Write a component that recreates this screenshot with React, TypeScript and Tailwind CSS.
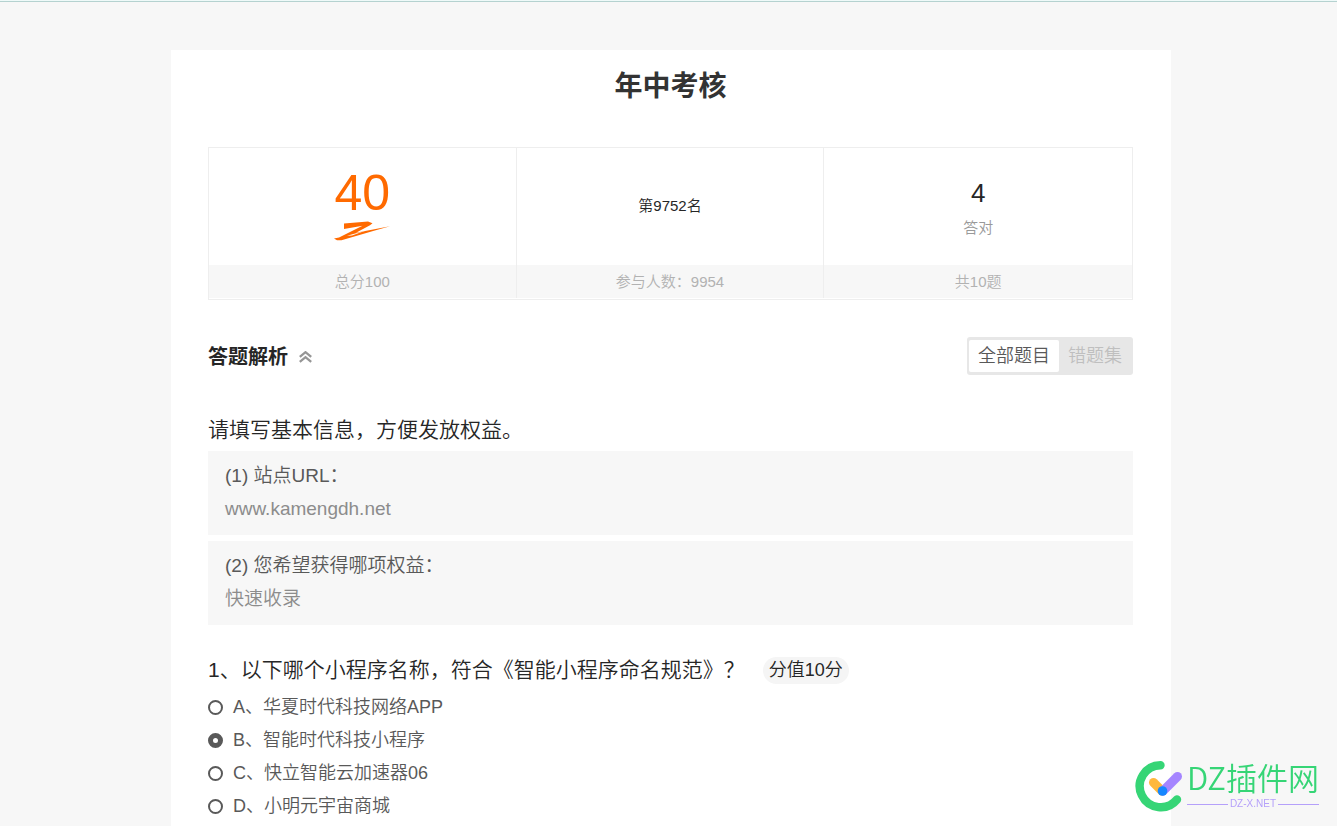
import { useState } from 'react';

type Stat = {
  id: string;
  footer: string;
};

const stats: Stat[] = [
  { id: 'score', footer: '总分100' },
  { id: 'rank', footer: '参与人数：9954' },
  { id: 'correct', footer: '共10题' },
];

const infoItems = [
  { id: 'url', question: '(1) 站点URL：', answer: 'www.kamengdh.net' },
  { id: 'benefit', question: '(2) 您希望获得哪项权益：', answer: '快速收录' },
];

const options = [
  { key: 'A', label: 'A、华夏时代科技网络APP' },
  { key: 'B', label: 'B、智能时代科技小程序' },
  { key: 'C', label: 'C、快立智能云加速器06' },
  { key: 'D', label: 'D、小明元宇宙商城' },
];

const tabs = [
  { id: 'all', label: '全部题目' },
  { id: 'wrong', label: '错题集' },
];

function Scribble() {
  return (
    <svg width="56" height="20" viewBox="0 0 56 20" fill="#ff6a00" aria-hidden="true">
      <path d="M10 2.4 34 0.4 38.5 2.2 36 4.2 22 11.8 56 5.2 40 9.8 7.5 19.2 3 19.2 0 17.6 5 16.4 28.5 4.8 10 8Z" />
      <path d="M13 14.8 32 9.4 18 14.4Z" fill="#fff" />
    </svg>
  );
}

function StatBody({ id }: { id: string }) {
  if (id === 'score') {
    return (
      <>
        <span className="text-[50px] leading-[42px] text-[#ff6a00]">40</span>
        <span className="pt-[7px]">
          <Scribble />
        </span>
      </>
    );
  }
  if (id === 'rank') {
    return <span className="pb-[2px] text-[15px] leading-6">第9752名</span>;
  }
  return (
    <>
      <span className="pt-1 text-[26px] leading-[38px]">4</span>
      <span className="text-[15px] leading-8 text-[#999]">答对</span>
    </>
  );
}

function Watermark() {
  return (
    <div className="fixed right-[18px] bottom-[14px] flex items-center gap-1" aria-hidden="true">
      <svg width="48" height="52" viewBox="0 0 48 52" fill="none" strokeLinecap="round">
        <path d="M25.5 5.2A21 21 0 1 0 42 39.5" stroke="#36d576" strokeWidth="8.4" />
        <path d="M18.5 22.5 27 31" stroke="#ffb83d" strokeWidth="9" />
        <path d="M42.5 16.5 28 31" stroke="#a585ff" strokeWidth="9" />
        <circle cx="27.5" cy="31" r="4.8" fill="#1687ff" />
      </svg>
      <div>
        <p className="mb-2 font-['Noto_Sans_CJK_SC',sans-serif] text-[31px] leading-7 font-[350] text-[#36d576]">
          DZ插件网
        </p>
        <p className="flex items-center gap-[2px] text-[10px] leading-[10px] text-[#b5a0fa]">
          <span className="h-px flex-1 bg-[#b5a0fa]" />
          DZ-X.NET
          <span className="h-px flex-1 bg-[#b5a0fa]" />
        </p>
      </div>
    </div>
  );
}

export default function App() {
  const [tab, setTab] = useState('all');
  const [selected, setSelected] = useState('B');

  return (
    <div
      lang="zh-CN"
      className="flex min-h-screen flex-col border-t border-[#effaf9] bg-[#f7f7f7] font-['Liberation_Sans','Noto_Sans_CJK_SC',sans-serif] font-[350] text-[#262626]"
    >
      <div className="h-px bg-[#b5d2d0]" />
      <div className="flex flex-1 flex-col pt-12 pl-[5px]">
        <main className="mx-auto w-full max-w-[1000px] flex-1 bg-white pt-[17px] pr-[38px] pl-[37px]">
          <h1 className="text-center text-[28px] leading-10 font-bold text-[#333]">年中考核</h1>

          <section className="mt-10 grid grid-cols-3 divide-x divide-[#eee] border border-[#eee] pb-px text-center">
            {stats.map((stat) => (
              <div key={stat.id}>
                <div className="flex h-[117px] flex-col items-center justify-center">
                  <StatBody id={stat.id} />
                </div>
                <p className="bg-[#f7f7f7] text-[15px] leading-[33px] text-[#b2b2b2]">
                  {stat.footer}
                </p>
              </div>
            ))}
          </section>

          <div className="mt-[37px] flex items-start justify-between">
            <h2 className="flex items-center gap-[11px] text-[20px] leading-10 font-bold">
              答题解析
              <button type="button" aria-label="收起">
                <svg
                  width="13"
                  height="13"
                  viewBox="0 0 13 13"
                  fill="none"
                  stroke="#969696"
                  strokeWidth="2.3"
                >
                  <path d="M0.8 5.8 6.5 1.2l5.7 4.6M0.8 10.8l5.7-4.6 5.7 4.6" />
                </svg>
              </button>
            </h2>
            <div className="flex rounded-[3px] bg-[#e7e7e7] px-[2px] py-[3px]">
              {tabs.map((item) => (
                <button
                  key={item.id}
                  type="button"
                  onClick={() => setTab(item.id)}
                  className={`rounded-[2px] px-[9px] text-[18px] leading-8 ${
                    tab === item.id ? 'bg-white text-[#595959]' : 'text-[#bfbfbf]'
                  }`}
                >
                  {item.label}
                </button>
              ))}
            </div>
          </div>

          <h3 className="mt-8 text-[21px] leading-[42px] font-[350]">
            请填写基本信息，方便发放权益。
          </h3>
          <div className="space-y-[6px]">
            {infoItems.map((item) => (
              <div key={item.id} className="bg-[#f7f7f7] px-[17px] pt-2 pb-[10px] text-[19px] leading-[33px]">
                <p className="text-[#595959]">{item.question}</p>
                <p className="text-[#8c8c8c]">{item.answer}</p>
              </div>
            ))}
          </div>

          <fieldset className="mt-[25px]">
            <legend className="mb-px flex items-center gap-[18px] text-[21px] leading-10">
              1、以下哪个小程序名称，符合《智能小程序命名规范》？
              <span className="rounded-full bg-[#f5f5f5] px-[6px] text-[18px] leading-[27px]">
                分值10分
              </span>
            </legend>
            {options.map((option) => (
              <label
                key={option.key}
                className="flex items-center gap-[10px] text-[18px] leading-[33px] text-[#595959]"
              >
                <input
                  type="radio"
                  name="question-1"
                  value={option.key}
                  checked={selected === option.key}
                  onChange={() => setSelected(option.key)}
                  className="size-[15px] appearance-none rounded-full border-2 border-[#595959] bg-white checked:border-[5px]"
                />
                {option.label}
              </label>
            ))}
          </fieldset>
        </main>
      </div>
      <Watermark />
    </div>
  );
}
